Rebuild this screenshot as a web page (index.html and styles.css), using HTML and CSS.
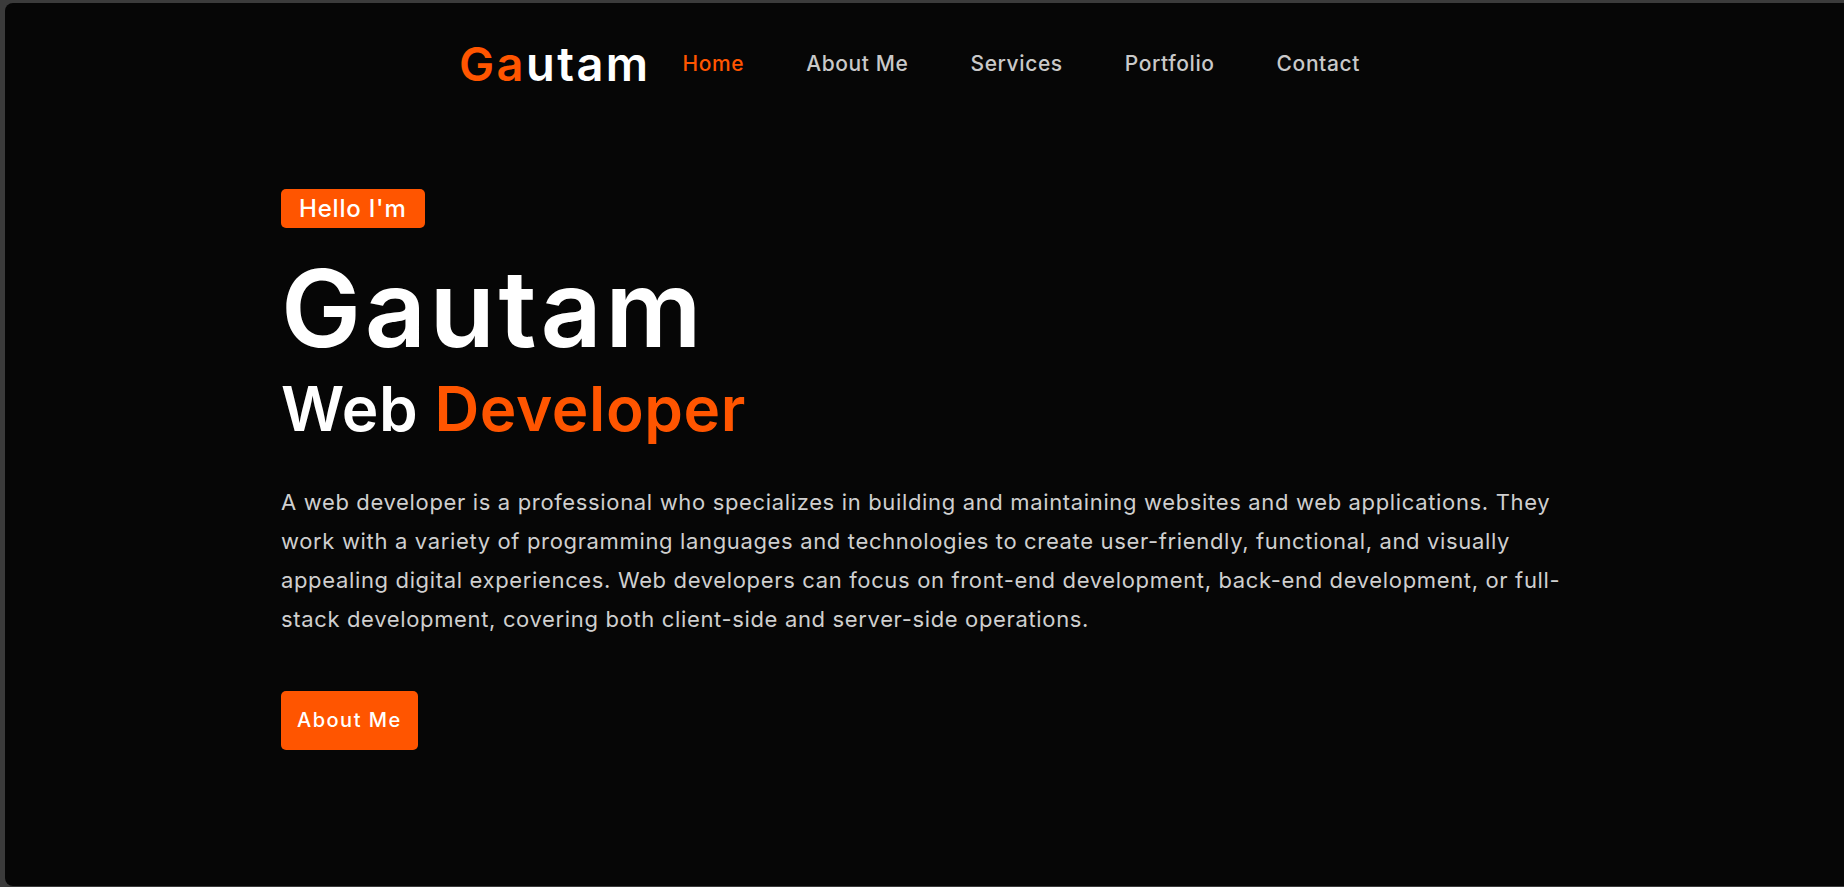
FILE: index.html
```html
<!DOCTYPE html>
<html lang="en">
<head>
<meta charset="utf-8">
<title>Gautam - Web Developer</title>
<link rel="stylesheet" href="styles.css">
</head>
<body>
<div class="panel">
  <header class="header">
    <a class="logo" href="#"><span class="accent">Ga</span>utam</a>
    <nav class="nav">
      <a class="nav-link active" href="#">Home</a>
      <a class="nav-link" href="#">About Me</a>
      <a class="nav-link" href="#">Services</a>
      <a class="nav-link" href="#">Portfolio</a>
      <a class="nav-link" href="#">Contact</a>
    </nav>
  </header>
  <section class="hero">
    <span class="badge">Hello I'm</span>
    <h1 class="name">Gautam</h1>
    <h2 class="role">Web <span class="accent">Developer</span></h2>
    <p class="intro">A web developer is a professional who specializes in building and maintaining websites and web applications. They work with a variety of programming languages and technologies to create user-friendly, functional, and visually appealing digital experiences. Web developers can focus on front-end development, back-end development, or full-stack development, covering both client-side and server-side operations.</p>
    <a class="btn" href="#">About Me</a>
  </section>
</div>
</body>
</html>
```
FILE: styles.css
```css
* { box-sizing: border-box; }
html, body { height: 100%; }
body {
  margin: 0;
  background: #3b3b3b;
  font-family: "Inter", "Open Sans", "DejaVu Sans", sans-serif;
  padding: 3px 0 1px 5px;
}
.panel {
  height: 100%;
  background: #060606;
  border-radius: 8px 0 0 8px;
  overflow: hidden;
}
a { text-decoration: none; }
.accent { color: #ff5500; }
.header {
  height: 121px;
  display: flex;
  align-items: center;
  padding-left: 454px;
}
.logo {
  font-size: 47px;
  font-weight: 600;
  color: #ffffff;
  letter-spacing: 2.4px;
  margin-right: 32px;
}
.nav { display: flex; gap: 62px; }
.nav-link {
  font-size: 21px;
  font-weight: 500;
  letter-spacing: 0.6px;
  color: #c9c9c9;
}
.nav-link.active { color: #ff5500; }
.hero {
  padding: 65px 0 0 276px;
  display: flex;
  flex-direction: column;
  align-items: flex-start;
}
.badge {
  background: #ff5500;
  color: #fff;
  font-size: 24px;
  font-weight: 500;
  letter-spacing: 0.8px;
  height: 39px;
  line-height: 39px;
  padding: 0 18px;
  border-radius: 5px;
}
.name {
  margin: 22px 0 0;
  font-size: 107px;
  font-weight: 600;
  letter-spacing: 3.5px;
  line-height: 1.1;
  color: #fff;
}
.role {
  margin: 4px 0 0;
  font-size: 62px;
  font-weight: 600;
  letter-spacing: 0.6px;
  line-height: 1.2;
  color: #fff;
}
.intro {
  margin: 37px 0 0;
  max-width: 1290px;
  font-size: 22px;
  letter-spacing: 0.65px;
  line-height: 39px;
  color: #cfcfcf;
}
.btn {
  margin-top: 52px;
  background: #ff5500;
  color: #fff;
  font-size: 20px;
  font-weight: 500;
  letter-spacing: 1.5px;
  height: 59px;
  line-height: 59px;
  padding: 0 16px;
  border-radius: 5px;
}
```
